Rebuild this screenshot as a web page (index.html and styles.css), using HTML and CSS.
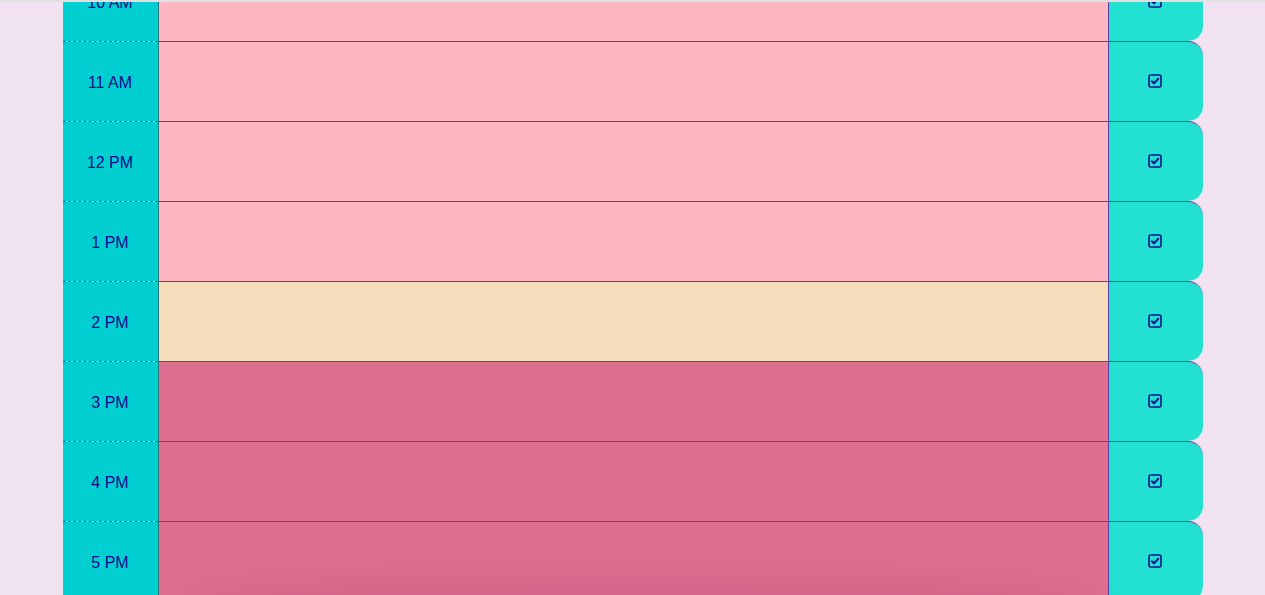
FILE: index.html
```html
<!DOCTYPE html>
<html lang="en">
<head>
<meta charset="utf-8">
<title>Work Day Scheduler</title>
<link rel="stylesheet" href="styles.css">
</head>
<body>
<div class="topline"></div>
<main class="container">
  <div class="row">
    <div class="hour">10 AM</div>
    <textarea class="description past"></textarea>
    <button class="saveBtn" aria-label="save"><svg class="icon" viewBox="0 0 14 14" width="14" height="14"><rect x="1" y="1" width="12" height="12" rx="1.5"/><polyline points="3.8,7.2 6,9.2 10.3,4.8"/></svg></button>
  </div>
  <div class="row">
    <div class="hour">11 AM</div>
    <textarea class="description past"></textarea>
    <button class="saveBtn" aria-label="save"><svg class="icon" viewBox="0 0 14 14" width="14" height="14"><rect x="1" y="1" width="12" height="12" rx="1.5"/><polyline points="3.8,7.2 6,9.2 10.3,4.8"/></svg></button>
  </div>
  <div class="row">
    <div class="hour">12 PM</div>
    <textarea class="description past"></textarea>
    <button class="saveBtn" aria-label="save"><svg class="icon" viewBox="0 0 14 14" width="14" height="14"><rect x="1" y="1" width="12" height="12" rx="1.5"/><polyline points="3.8,7.2 6,9.2 10.3,4.8"/></svg></button>
  </div>
  <div class="row">
    <div class="hour">1 PM</div>
    <textarea class="description past"></textarea>
    <button class="saveBtn" aria-label="save"><svg class="icon" viewBox="0 0 14 14" width="14" height="14"><rect x="1" y="1" width="12" height="12" rx="1.5"/><polyline points="3.8,7.2 6,9.2 10.3,4.8"/></svg></button>
  </div>
  <div class="row">
    <div class="hour">2 PM</div>
    <textarea class="description present"></textarea>
    <button class="saveBtn" aria-label="save"><svg class="icon" viewBox="0 0 14 14" width="14" height="14"><rect x="1" y="1" width="12" height="12" rx="1.5"/><polyline points="3.8,7.2 6,9.2 10.3,4.8"/></svg></button>
  </div>
  <div class="row">
    <div class="hour">3 PM</div>
    <textarea class="description future"></textarea>
    <button class="saveBtn" aria-label="save"><svg class="icon" viewBox="0 0 14 14" width="14" height="14"><rect x="1" y="1" width="12" height="12" rx="1.5"/><polyline points="3.8,7.2 6,9.2 10.3,4.8"/></svg></button>
  </div>
  <div class="row">
    <div class="hour">4 PM</div>
    <textarea class="description future"></textarea>
    <button class="saveBtn" aria-label="save"><svg class="icon" viewBox="0 0 14 14" width="14" height="14"><rect x="1" y="1" width="12" height="12" rx="1.5"/><polyline points="3.8,7.2 6,9.2 10.3,4.8"/></svg></button>
  </div>
  <div class="row last">
    <div class="hour">5 PM</div>
    <textarea class="description future"></textarea>
    <button class="saveBtn" aria-label="save"><svg class="icon" viewBox="0 0 14 14" width="14" height="14"><rect x="1" y="1" width="12" height="12" rx="1.5"/><polyline points="3.8,7.2 6,9.2 10.3,4.8"/></svg></button>
  </div>
</main>
<div class="bottom-shadow"></div>
</body>
</html>
```

FILE: styles.css
```css
html, body {
  margin: 0;
  padding: 0;
}
body {
  background: #f0e2f0;
  font-family: "Liberation Sans", Arial, sans-serif;
  line-height: 1;
  overflow: hidden;
  height: 595px;
}
.topline {
  position: fixed;
  top: 0;
  left: 0;
  right: 0;
  height: 2px;
  background: #e2dfe2;
  z-index: 5;
}
.container {
  width: 1140px;
  margin: -39px auto 0;
  display: flex;
  flex-direction: column;
}
.row {
  display: grid;
  grid-template-columns: 95px 950px 95px;
  height: 80px;
}
.hour {
  background: linear-gradient(#b8eef0, #b8eef0) top left / 100% 1px no-repeat, #00ced1;
  background-origin: border-box;
  color: #0a0a8c;
  font-size: 16px;
  border-top: 1px dashed #7a3a8e;
  padding-top: 2px;
  display: flex;
  align-items: center;
  justify-content: center;
}
.description {
  margin: 0;
  padding: 10px;
  resize: none;
  border: none;
  border-top: 1px solid #7a3a8e;
  border-left: 1px solid #24787c;
  font-family: inherit;
  outline: none;
}
.past { background: #ffb6c1; }
.present { background: #f5dcbb; }
.future { background: #de6f90; }
.saveBtn {
  margin: 0;
  padding: 0 2px 1px 0;
  background: #22e0d2;
  border: none;
  border-top: 1px solid #7a3a8e;
  border-left: 1px solid #5a40a4;
  border-radius: 0 15px 15px 0;
  display: flex;
  align-items: center;
  justify-content: center;
  cursor: pointer;
}
.icon {
  display: block;
  fill: none;
  stroke: #0c1488;
  stroke-width: 1.6;
  stroke-linejoin: round;
  stroke-linecap: round;
}
.icon polyline {
  stroke-width: 2;
}
.bottom-shadow {
  position: fixed;
  left: 190px;
  width: 900px;
  bottom: -30px;
  height: 30px;
  border-radius: 50%;
  box-shadow: 0 0 40px 10px rgba(150, 40, 90, 0.2);
  z-index: 4;
}
```
